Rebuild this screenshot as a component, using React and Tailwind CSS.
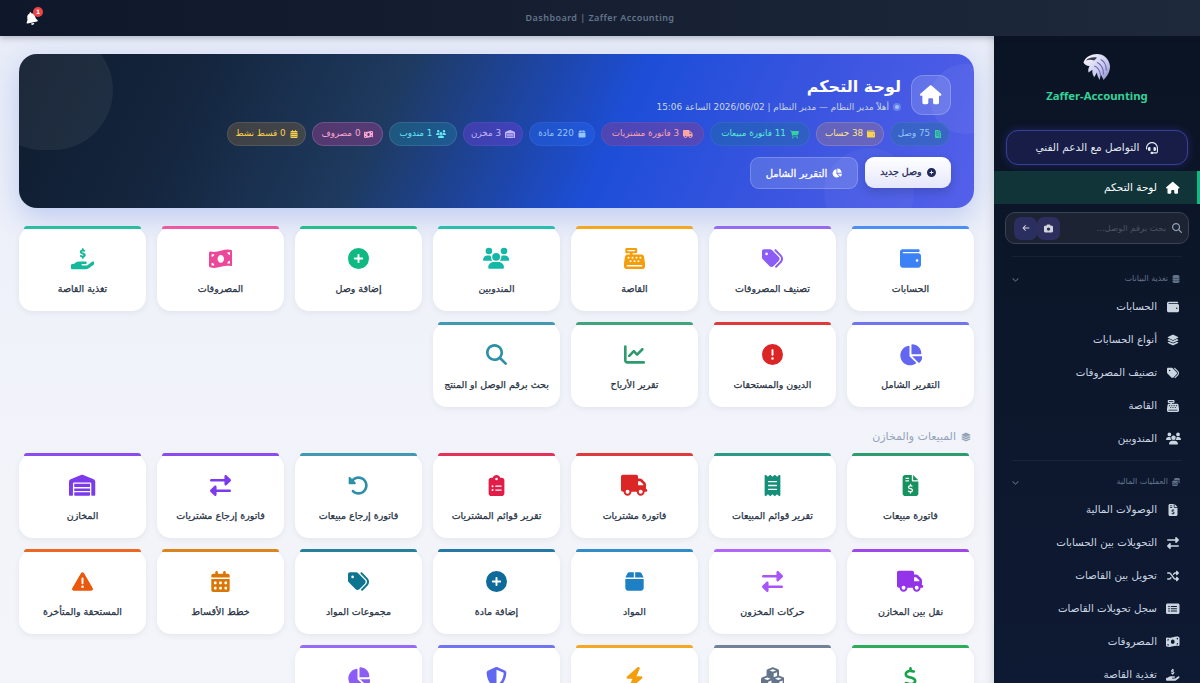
import React from "react";
import {
  FaHouse, FaWallet, FaTags, FaCashRegister, FaUsers, FaCirclePlus, FaMoneyBillWave, FaHandHoldingDollar,
  FaChartPie, FaCircleExclamation, FaChartLine, FaMagnifyingGlass, FaFileInvoiceDollar, FaReceipt, FaTruck,
  FaClipboardList, FaRotateLeft, FaRightLeft, FaWarehouse, FaBox, FaTriangleExclamation, FaCalendarDays,
  FaDollarSign, FaCubes, FaBolt, FaShieldHalved, FaLayerGroup, FaBell, FaCartShopping, FaHeadset, FaCamera,
  FaArrowLeft, FaChevronDown, FaDatabase, FaShuffle, FaRectangleList, FaCoins, FaFileInvoice,
} from "react-icons/fa6";

// react-icons boxes every glyph in a 1em square, so glyphs wider than tall come out too small.
const wide = new Map([
  [FaTruck, 1.25], [FaWarehouse, 1.25], [FaUsers, 1.25], [FaCubes, 1.125], [FaMoneyBillWave, 1.125],
  [FaHandHoldingDollar, 1.125], [FaChartPie, 1.125], [FaHouse, 1.125], [FaCartShopping, 1.125],
  [FaRectangleList, 1.125], [FaTags, 1.0], [FaCoins, 1.0],
]);

function Ic({ icon: Icon, size, className }) {
  const scale = wide.get(Icon) || 1;
  const px = size * scale;
  return (
    <span className={`inline-flex items-center justify-center overflow-visible ${className || ""}`} style={{ height: size, width: px }}>
      <Icon style={{ fontSize: px, flex: "none" }} />
    </span>
  );
}

const pills = [
  [FaFileInvoice, "75 وصل", "text-[#93c5fd]", "text-[#34d399]", "w-[60px] bg-[#2a6ba8]/50 border-white/5"],
  [FaWallet, "38 حساب", "text-[#fde68a]", "text-[#fcd34d]", "w-[68px] bg-[#8a6f9a]/50 border-white/15"],
  [FaCartShopping, "11 فاتورة مبيعات", "text-[#5eead4]", "text-[#34d399]", "w-[100px] bg-[#1f6f9a]/40 border-white/5"],
  [FaTruck, "3 فاتورة مشتريات", "text-[#fda4af]", "text-[#fca5a5]", "w-[103px] bg-[#8a3f8f]/45 border-white/5"],
  [FaBox, "220 مادة", "text-[#93c5fd]", "text-[#93c5fd]", "w-[66px] bg-[#2563eb]/45 border-white/5"],
  [FaWarehouse, "3 مخزن", "text-[#c4b5fd]", "text-[#c4b5fd]", "w-[60px] bg-[#5b3fc8]/55 border-white/5"],
  [FaUsers, "1 مندوب", "text-[#67e8f9]", "text-[#67e8f9]", "w-[68px] bg-[#1f80a0]/40 border-white/10"],
  [FaMoneyBillWave, "0 مصروف", "text-[#f9a8d4]", "text-[#f9a8d4]", "w-[71px] bg-[#9a3f90]/45 border-white/15"],
  [FaCalendarDays, "0 قسط نشط", "text-[#fcd34d]", "text-[#fcd34d]", "w-[79px] bg-[#8a6a40]/35 border-white/10"],
];

const sec1 = [
  [FaWallet, "الحسابات", "text-[#3b82f6]", "bg-[#3b82f6]"],
  [FaTags, "تصنيف المصروفات", "text-[#8b5cf6]", "bg-[#8b5cf6]"],
  [FaCashRegister, "القاصة", "text-[#f59e0b]", "bg-[#f59e0b]"],
  [FaUsers, "المندوبين", "text-[#14b8a6]", "bg-[#14b8a6]"],
  [FaCirclePlus, "إضافة وصل", "text-[#10b981]", "bg-[#10b981]"],
  [FaMoneyBillWave, "المصروفات", "text-[#ec4899]", "bg-[#ec4899]"],
  [FaHandHoldingDollar, "تغذية القاصة", "text-[#14b89a]", "bg-[#14b89a]"],
  [FaChartPie, "التقرير الشامل", "text-[#6366f1]", "bg-[#6366f1]"],
  [FaCircleExclamation, "الديون والمستحقات", "text-[#dc2626]", "bg-[#dc2626]"],
  [FaChartLine, "تقرير الأرباح", "text-[#2e9a6e]", "bg-[#2e9a6e]"],
  [FaMagnifyingGlass, "بحث برقم الوصل او المنتج", "text-[#2e8fa8]", "bg-[#2e8fa8]"],
];

const sec2 = [
  [FaFileInvoiceDollar, "فاتورة مبيعات", "text-[#16925f]", "bg-[#16925f]"],
  [FaReceipt, "تقرير قوائم المبيعات", "text-[#14907a]", "bg-[#14907a]"],
  [FaTruck, "فاتورة مشتريات", "text-[#dc2626]", "bg-[#dc2626]"],
  [FaClipboardList, "تقرير قوائم المشتريات", "text-[#e11d48]", "bg-[#e11d48]"],
  [FaRotateLeft, "فاتورة إرجاع مبيعات", "text-[#2e8fa8]", "bg-[#2e8fa8]"],
  [FaRightLeft, "فاتورة إرجاع مشتريات", "text-[#7c3aed]", "bg-[#7c3aed]"],
  [FaWarehouse, "المخازن", "text-[#7c3aed]", "bg-[#7c3aed]"],
  [FaTruck, "نقل بين المخازن", "text-[#9333ea]", "bg-[#9333ea]"],
  [FaRightLeft, "حركات المخزون", "text-[#a855f7]", "bg-[#a855f7]"],
  [FaBox, "المواد", "text-[#1d7fc4]", "bg-[#1d7fc4]"],
  [FaCirclePlus, "إضافة مادة", "text-[#0e6a9b]", "bg-[#0e6a9b]"],
  [FaTags, "مجموعات المواد", "text-[#0e7490]", "bg-[#0e7490]"],
  [FaCalendarDays, "خطط الأقساط", "text-[#d97706]", "bg-[#d97706]"],
  [FaTriangleExclamation, "المستحقة والمتأخرة", "text-[#ea580c]", "bg-[#ea580c]"],
  [FaDollarSign, "", "text-[#16a34a]", "bg-[#16a34a]"],
  [FaCubes, "", "text-[#64748b]", "bg-[#64748b]"],
  [FaBolt, "", "text-[#f59e0b]", "bg-[#f59e0b]"],
  [FaShieldHalved, "", "text-[#6366f1]", "bg-[#6366f1]"],
  [FaChartPie, "", "text-[#8b5cf6]", "bg-[#8b5cf6]"],
];

const side1 = [
  [FaWallet, "الحسابات"],
  [FaLayerGroup, "أنواع الحسابات"],
  [FaTags, "تصنيف المصروفات"],
  [FaCashRegister, "القاصة"],
  [FaUsers, "المندوبين"],
];
const side2 = [
  [FaFileInvoiceDollar, "الوصولات المالية"],
  [FaRightLeft, "التحويلات بين الحسابات"],
  [FaShuffle, "تحويل بين القاصات"],
  [FaRectangleList, "سجل تحويلات القاصات"],
  [FaMoneyBillWave, "المصروفات"],
  [FaHandHoldingDollar, "تغذية القاصة"],
];

function Card({ item }) {
  const [Icon, label, tc, bc] = item;
  return (
    <div className="relative h-[84px] rounded-[14px] bg-white shadow-[0_2px_6px_rgba(15,23,42,0.06)] flex flex-col items-center pt-[21px]">
      <span className={`absolute top-[-1px] left-[5px] right-[5px] h-[3px] rounded-t-[6px] opacity-90 ${bc}`} />
      <Ic icon={Icon} size={21} className={tc} />
      {label && <span className="mt-[13px] text-[9.5px] leading-[14px] text-[#273244] whitespace-nowrap [-webkit-text-stroke:0.25px_#273244]">{label}</span>}
    </div>
  );
}

function Eagle() {
  return (
    <svg viewBox="0 0 30 30" className="w-[28px] h-[28px]">
      <defs>
        <linearGradient id="eg" x1="0" y1="0" x2="1" y2="1">
          <stop offset="0" stopColor="#ffffff" />
          <stop offset="0.6" stopColor="#c9c9ee" />
          <stop offset="1" stopColor="#8886c8" />
        </linearGradient>
      </defs>
      <path d="M1 9C3 4 9 1 15 1c7 0 13 5 14 13 0 6-3 11-7 15-1-3-2-4-3-6l-1 6c-2-3-3-5-3-8l-3 5c-2-3-2-5-2-8l-4 3c-1-3 0-5 1-7-2 0-4-1-5-2-1-1-2-2-1-3z" fill="url(#eg)" />
      <path d="M3 8c3-3 8-4 12-3l-3 3c-3-1-6-1-9 0z" fill="#3a3a52" />
      <path d="M12 14c4 1 6 5 7 10M15 10c4 2 7 6 7 13M19 7c4 2 6 7 6 12" stroke="#6d6bb0" strokeWidth="1.1" fill="none" />
    </svg>
  );
}

function SideItem({ item }) {
  const [Icon, label] = item;
  return (
    <div className="h-[33px] flex items-center gap-[9px] pr-[20px] text-[#cbd5e1]">
      <span className="w-[14px] flex justify-center"><Ic icon={Icon} size={12} className="text-[#cbd5e1]" /></span>
      <span className="text-[10.3px] leading-none whitespace-nowrap">{label}</span>
    </div>
  );
}

function SideHead({ Icon, label }) {
  return (
    <div className="h-[20px] flex items-center justify-between pr-[20px] pl-[18px] text-[#64748b]">
      <span className="flex items-center gap-[4px]">
        <Icon className="text-[8px]" />
        <span className="text-[8px] whitespace-nowrap">{label}</span>
      </span>
      <FaChevronDown className="text-[7px]" />
    </div>
  );
}

export default function App() {
  return (
    <div className="h-[683px] w-[1200px] overflow-hidden flex flex-col font-['DejaVu_Sans',sans-serif]">
      <header className="relative z-20 h-[36px] shrink-0 flex items-center bg-gradient-to-r from-[#0f172a] to-[#1e293b] shadow-[0_2px_6px_rgba(15,23,42,0.25)]">
        <div className="relative ml-[25px]">
          <FaBell className="text-white text-[13px] -rotate-12" />
          <span className="absolute -top-[5px] -right-[5px] w-[10px] h-[10px] rounded-full bg-[#ef4444] text-white text-[6px] font-bold flex items-center justify-center">1</span>
        </div>
        <div className="absolute left-0 right-0 text-center text-[9px] font-semibold tracking-[0.45px] text-[#64748b] font-['Noto_Sans',sans-serif]">Dashboard | Zaffer Accounting</div>
      </header>

      <div className="flex flex-1 min-h-0">
        <main className="flex-1 min-w-0 pt-[18px] pl-[19px] pr-[20px] overflow-hidden bg-gradient-to-b from-[#e8ecf8] via-[#f1f3fa] to-[#f3f5fa] shadow-[inset_-8px_0_8px_-6px_rgba(15,23,42,0.12)]" dir="rtl">
          <section className="relative h-[154px] overflow-hidden rounded-[18px] px-[23px] pt-[21px] bg-[linear-gradient(115deg,#0f1c2e_0%,#14253d_18%,#1e3a5f_38%,#1d4ed8_62%,#3b55e0_80%,#5560ea_100%)] shadow-[0_10px_28px_rgba(29,78,216,0.22)]">
            <span className="absolute left-[-36px] top-[-24px] w-[130px] h-[120px] rounded-full bg-white/[0.06]" />
            <span className="absolute right-[-26px] top-[10px] w-[70px] h-[70px] rounded-full bg-white/[0.05]" />
            <span className="absolute right-[60px] bottom-[-30px] w-[90px] h-[90px] rounded-full bg-white/[0.04]" />
            <div className="relative flex items-center gap-[10px] h-[40px]">
              <div className="w-[40px] h-[40px] rounded-[12px] bg-white/15 border border-white/20 flex items-center justify-center">
                <Ic icon={FaHouse} size={19} className="text-white" />
              </div>
              <div>
                <div className="text-[16px] font-bold text-white leading-[22px]">لوحة التحكم</div>
                <div className="flex items-center gap-[4px] text-[8.9px] text-[#cbd5e1] leading-[14px] mt-[2px]">
                  <span className="w-[8px] h-[8px] rounded-full bg-[#93c5fd] border-2 border-[#6b7fe8]" />
                  <span className="whitespace-nowrap">أهلاً مدير النظام — مدير النظام | 2026/06/02 الساعة 15:06</span>
                </div>
              </div>
            </div>
            <div className="relative flex gap-[6px] mt-[7px] mr-[1px]">
              {pills.map(([Icon, label, tc, ic, bg], i) => (
                <div key={i} className={`h-[24px] rounded-full border flex items-center justify-center gap-[4px] whitespace-nowrap ${bg}`}>
                  <Ic icon={Icon} size={8} className={ic} />
                  <span className={`text-[8.8px] ${tc}`}>{label}</span>
                </div>
              ))}
            </div>
            <div className="relative flex gap-[7px] mt-[11px]">
              <button className="w-[86px] h-[31px] rounded-[9px] bg-gradient-to-b from-white to-[#e5e7fb] text-[#1e2a5a] flex items-center justify-center gap-[5px] shadow-[0_4px_10px_rgba(15,23,42,0.2)]">
                <FaCirclePlus className="text-[9px]" />
                <span className="text-[9.5px] [-webkit-text-stroke:0.3px_#1e2a5a]">وصل جديد</span>
              </button>
              <button className="w-[108px] h-[32px] rounded-[9px] bg-white/15 border border-white/20 text-white flex items-center justify-center gap-[5px]">
                <Ic icon={FaChartPie} size={9} />
                <span className="text-[10px] [-webkit-text-stroke:0.3px_#ffffff]">التقرير الشامل</span>
              </button>
            </div>
          </section>

          <div className="grid grid-cols-7 gap-x-[11px] gap-y-[12px] mt-[19px]">
            {sec1.map((c, i) => <Card key={i} item={c} />)}
          </div>

          <div className="flex items-center gap-[5px] h-[14px] mt-[23px] mb-[10px] pr-[3px] text-[#94a3b8]">
            <FaLayerGroup className="text-[10px]" />
            <span className="text-[11px]">المبيعات والمخازن</span>
          </div>

          <div className="grid grid-cols-7 gap-x-[11px] gap-y-[12px]">
            {sec2.map((c, i) => <Card key={i} item={c} />)}
          </div>
        </main>

        <aside className="w-[206px] shrink-0 overflow-hidden bg-gradient-to-b from-[#0b1424] to-[#0e1a33]" dir="rtl">
          <div className="h-[84px] flex flex-col items-center pt-[17px]">
            <Eagle />
            <div className="mt-[7px] text-[11.3px] font-bold text-[#34d399] leading-[16px] font-['Noto_Sans',sans-serif]" dir="ltr">Zaffer-Accounting</div>
          </div>
          <div className="mx-[12px] mt-[10px] h-[35px] rounded-[12px] border border-[#3c3f9a] bg-[#171d46] flex items-center justify-center gap-[7px] shadow-[0_0_8px_rgba(79,70,229,0.3)]">
            <FaHeadset className="text-[12px] text-[#e2e8f0]" />
            <span className="text-[10.5px] text-[#e2e8f0] whitespace-nowrap">التواصل مع الدعم الفني</span>
          </div>
          <div className="mt-[6px] h-[33px] flex items-center gap-[9px] pr-[20px] bg-[#103437] border-r-[3px] border-[#10b981] text-white">
            <span className="w-[14px] flex justify-center -mr-[3px]"><Ic icon={FaHouse} size={12} /></span>
            <span className="text-[10.5px]">لوحة التحكم</span>
          </div>
          <div className="mx-[11px] mt-[8px] h-[32px] rounded-[10px] border border-[#3a4256] bg-[#1c2333] flex items-center pr-[6px] pl-[8px] gap-[6px]">
            <FaMagnifyingGlass className="text-[10px] text-[#94a3b8]" />
            <span className="flex-1 text-[8.5px] text-[#4b5563] whitespace-nowrap">بحث برقم الوصل...</span>
            <span className="flex">
              <span className="w-[23px] h-[23px] rounded-[7px] bg-[#2e2f5e] flex items-center justify-center"><FaCamera className="text-[9px] text-[#d1d5db]" /></span>
              <span className="w-[23px] h-[23px] rounded-[7px] bg-[#2a2f5f] flex items-center justify-center"><FaArrowLeft className="text-[8px] text-[#d1d5db]" /></span>
            </span>
          </div>
          <div className="mx-[18px] mt-[12px] border-t border-white/5" />
          <div className="mt-[12px]"><SideHead Icon={FaDatabase} label="تغذية البيانات" /></div>
          <div className="mt-[1px]">{side1.map((s, i) => <SideItem key={i} item={s} />)}</div>
          <div className="mx-[18px] mt-[5px] border-t border-white/5" />
          <div className="mt-[11px]"><SideHead Icon={FaCoins} label="العمليات المالية" /></div>
          <div className="mt-[1px]">{side2.map((s, i) => <SideItem key={i} item={s} />)}</div>
        </aside>
      </div>
    </div>
  );
}
